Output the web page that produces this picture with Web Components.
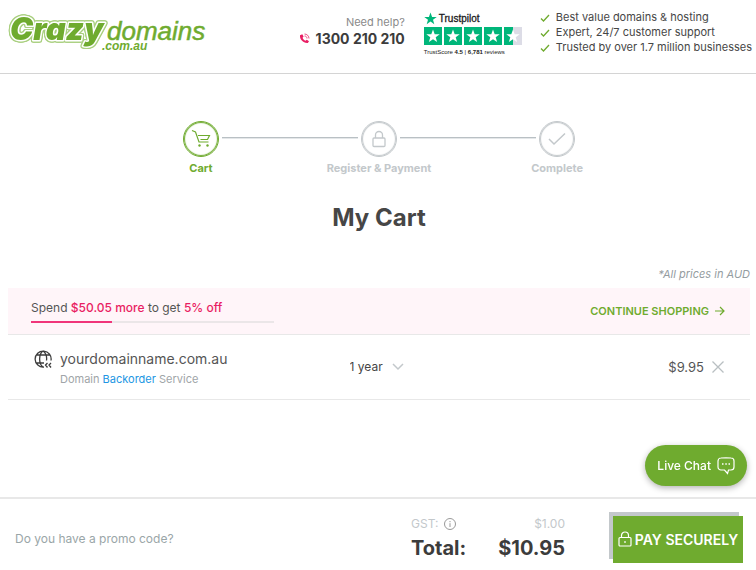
<!DOCTYPE html>
<html lang="en">
<head>
<meta charset="utf-8">
<meta name="viewport" content="width=device-width, initial-scale=1">
<title>My Cart</title>
<style>
    body {
        margin: 0;
        min-height: 100vh;
        display: flex;
        flex-direction: column;
        background: #fff;
        color: #464646;
        font-family: Inter, "Open Sans", sans-serif;
        font-size: 11px;
        --green: #6fab2f;
        --pink: #e91e63;
        --grey: #c3c8cb;
        --line: #e8e8e8;
    }
</style>
</head>
<body>
<site-header>
    <brand-logo slot="logo"></brand-logo>
    <phone-help></phone-help>
    <trust-score></trust-score>
    <benefit-list></benefit-list>
</site-header>

<cart-page>
    <cart-steps slot="steps">
        <cart-step label="Cart" active>
            <svg width="20" height="20" viewBox="0 0 20 20" fill="none" stroke="currentColor" stroke-width="1.2">
                <path d="M1 1.500l3.500 1.500 3.500 10h9.500M7 6.500h11.500l-2 4H9.500"/>
                <circle cx="8.500" cy="16.500" r="1.200" fill="currentColor" stroke="none"/>
                <circle cx="16.500" cy="16.500" r="1.200" fill="currentColor" stroke="none"/>
            </svg>
        </cart-step>
        <cart-step label="Register &amp; Payment">
            <svg width="16" height="18" viewBox="0 0 16 18" fill="none" stroke="currentColor" stroke-width="1.300">
                <rect x="2" y="8" width="12" height="8.500" rx="1"/>
                <path d="M4.500 8V5a3.500 3.500 0 0 1 7 0v3"/>
            </svg>
        </cart-step>
        <cart-step label="Complete">
            <svg width="18" height="14" viewBox="0 0 18 14" fill="none" stroke="currentColor" stroke-width="1.500">
                <path d="M1 7l5 5L17 1.500"/>
            </svg>
        </cart-step>
    </cart-steps>
    <spend-offer></spend-offer>
    <cart-item name="yourdomainname.com.au" price="$9.95">Domain <a href="#backorder">Backorder</a> Service</cart-item>
</cart-page>

<cart-footer></cart-footer>
<live-chat></live-chat>

<script>
// Creates the open shadow root of a component
class BaseElement extends HTMLElement {
    constructor() {
        super();
        this.attachShadow({ mode: 'open' });
    }

    connectedCallback() {
        this.shadowRoot.innerHTML = this.render();
    }
}

// Top bar with the logo on the left and the help details on the right
class SiteHeader extends BaseElement {
    render() {
        return `
            <style>
                :host { display: block; border-bottom: 1px solid #d4d4d4; }
                header {
                    display: flex;
                    justify-content: space-between;
                    height: 73px;
                    padding: 0 4px 0 8px;
                    box-sizing: border-box;
                }
                .info { display: flex; gap: 19px; padding-top: 10px; }
            </style>
            <header>
                <slot name="logo"></slot>
                <div class="info"><slot></slot></div>
            </header>
        `;
    }
}

// Logo: outlined first word, plain second word, suffix underneath
class BrandLogo extends BaseElement {
    render() {
        return `
            <style>
                :host { display: block; padding-top: 8px; }
                a { display: block; color: var(--green); text-decoration: none; }
                svg { display: block; overflow: visible; }
                .crazy {
                    font: italic 900 31px Inter, sans-serif;
                    stroke: #fff;
                    stroke-width: 3px;
                    stroke-linejoin: round;
                    paint-order: stroke;
                    filter: drop-shadow(1px 0 0 #a9cf7f) drop-shadow(-1px 0 0 #a9cf7f) drop-shadow(0 1px 0 #a9cf7f) drop-shadow(0 -1px 0 #a9cf7f);
                }
                .domains { font: italic 400 26px "Liberation Sans", sans-serif; stroke: currentColor; stroke-width: 0.5px; }
                .suffix { font: italic 700 12px "Liberation Sans", sans-serif; }
            </style>
            <a href="#home" aria-label="Crazy Domains home">
                <svg width="200" height="48" viewBox="0 0 200 48" fill="currentColor">
                    <text class="crazy" x="2" y="32">Crazy</text>
                    <text class="domains" x="99" y="32">domains</text>
                    <text class="suffix" x="94" y="42">.com.au</text>
                </svg>
            </a>
        `;
    }
}

class PhoneHelp extends BaseElement {
    render() {
        return `
            <style>
                :host { display: block; padding-top: 5px; text-align: right; }
                p { margin: 0; line-height: 15px; color: #8a8a8a; }
                a {
                    display: flex;
                    align-items: center;
                    gap: 6px;
                    color: #3c3c3c;
                    font-size: 14px;
                    font-weight: 700;
                    line-height: 17px;
                    text-decoration: none;
                }
                svg { color: var(--pink); }
            </style>
            <p>Need help?</p>
            <a href="tel:1300210210">
                <svg width="11" height="11" viewBox="0 0 11 11" fill="none" stroke="currentColor" aria-hidden="true">
                    <path d="M1 2.300C.5 6.500 4.500 10.500 8.800 10l1.200-1.800-2.200-1.400-1.300 1C5 7.200 4 6 3.600 4.700l1-1.100L3.300 1.300Z" fill="currentColor" stroke="none"/>
                    <path d="M5.500 1c2.500 0 4.500 2 4.500 4.500M5.500 3c1.500 0 2.500 1 2.500 2.500" stroke-width=".8"/>
                </svg>
                1300 210 210
            </a>
        `;
    }
}

// Trustpilot rating, the last star is half filled
class TrustScore extends BaseElement {
    render() {
        const star = 'M0-7 1.700-2.200H6.700L2.700.8 4.100 5.600 0 2.700-4.100 5.600-2.700.8-6.700-2.200H-1.700Z';
        const stars = [0, 1, 2, 3, 4].map(i => `
            <rect x="${i * 20}" width="18" height="18" fill="${i < 4 ? '#00b67a' : 'url(#half)'}"/>
            <path d="${star}" transform="translate(${i * 20 + 9} 9.500)" fill="#fff"/>
        `).join('');
        return `
            <style>
                :host { display: block; width: 97px; color: #1b1b21; font-family: "Liberation Sans", sans-serif; }
                .name { display: flex; align-items: center; gap: 2px; height: 16px; font-size: 10px; -webkit-text-stroke: 0.3px; }
                .stars { display: block; margin-top: 1px; }
                .score { margin-top: 4px; font-size: 6px; line-height: 7px; white-space: nowrap; }
            </style>
            <div class="name">
                <svg width="13" height="13" viewBox="-7 -7 14 13" fill="#00b67a" aria-hidden="true"><path d="${star}"/></svg>
                Trustpilot
            </div>
            <svg class="stars" width="98" height="18" role="img" aria-label="4.5 out of 5 stars">
                <linearGradient id="half">
                    <stop offset=".5" stop-color="#00b67a"/>
                    <stop offset=".5" stop-color="#dcdce6"/>
                </linearGradient>
                ${stars}
            </svg>
            <div class="score">TrustScore <b>4.5</b> | <b>6,781</b> reviews</div>
        `;
    }
}

class BenefitList extends BaseElement {
    render() {
        const items = [
            'Best value domains &amp; hosting',
            'Expert, 24/7 customer support',
            'Trusted by over 1.7 million businesses'
        ];
        return `
            <style>
                :host { display: block; }
                ul { margin: 0; padding: 0; list-style: none; }
                li { display: flex; align-items: center; gap: 6px; line-height: 15px; white-space: nowrap; }
                svg { color: var(--green); }
            </style>
            <ul>
                ${items.map(text => `
                    <li>
                        <svg width="10" height="8" viewBox="0 0 10 8" fill="none" stroke="currentColor" stroke-width="1.300" aria-hidden="true"><path d="M1 4.500l2.500 2.500L9 1"/></svg>
                        ${text}
                    </li>
                `).join('')}
            </ul>
        `;
    }
}

class CartSteps extends BaseElement {
    render() {
        return `
            <style>
                :host {
                    display: grid;
                    grid-template-columns: repeat(3, 1fr);
                    width: 72%;
                    margin: 0 auto;
                }
            </style>
            <slot></slot>
        `;
    }
}

// One step. The lines of neighbouring steps meet between the circles
class CartStep extends BaseElement {
    render() {
        return `
            <style>
                :host { display: block; color: var(--grey); text-align: center; font-weight: 700; }
                :host([active]) { color: var(--green); }
                .rail { display: flex; align-items: center; gap: 3px; }
                .rail::before, .rail::after {
                    content: "";
                    flex: 1;
                    height: 1px;
                    margin-bottom: 2px;
                    background: #b9c0c4;
                    border-bottom: 1px solid #e4e7e9;
                }
                :host(:first-child) .rail::before, :host(:last-child) .rail::after { visibility: hidden; }
                .circle {
                    display: grid;
                    place-items: center;
                    width: 34px;
                    height: 34px;
                    border: 1px solid;
                    border-radius: 50%;
                    box-shadow: inset 0 0 1px 1px currentColor;
                }
                .label { margin-top: 4px; line-height: 14px; }
            </style>
            <div class="rail"><div class="circle"><slot></slot></div></div>
            <div class="label">${this.getAttribute('label').replace('&', '&amp;')}</div>
        `;
    }
}

class CartPage extends BaseElement {
    render() {
        return `
            <style>
                :host { display: block; flex: 1; padding: 47px 6px 0 8px; }
                h1 { margin: 27px 0 0; text-align: center; font-size: 24px; line-height: 32px; }
                .note { margin: 32px 0 6px; text-align: right; font-style: italic; line-height: 16px; color: #949c9f; }
            </style>
            <main>
                <slot name="steps"></slot>
                <h1>My Cart</h1>
                <p class="note">*All prices in AUD</p>
                <slot></slot>
            </main>
        `;
    }
}

class SpendOffer extends BaseElement {
    render() {
        return `
            <style>
                :host {
                    display: flex;
                    justify-content: space-between;
                    align-items: center;
                    height: 46px;
                    padding: 0 25px 0 23px;
                    background: #fff5f9;
                    border-bottom: 1px solid var(--line);
                }
                label { display: block; color: #555; font-size: 12px; line-height: 16px; }
                b { color: var(--pink); font-weight: 500; }
                progress {
                    display: block;
                    appearance: none;
                    width: 243px;
                    height: 2px;
                    margin-top: 5px;
                    border: 0;
                }
                progress::-webkit-progress-bar { background: #ebe6e8; }
                progress::-webkit-progress-value { background: #f0357a; }
                a {
                    display: flex;
                    align-items: center;
                    gap: 6px;
                    color: var(--green);
                    font-weight: 600;
                    text-decoration: none;
                }
            </style>
            <div>
                <label for="spend">Spend <b>$50.05 more</b> to get <b>5% off</b></label>
                <progress id="spend" value="1" max="3"></progress>
            </div>
            <a href="#shop">
                CONTINUE SHOPPING
                <svg width="10" height="10" viewBox="0 0 10 10" fill="none" stroke="currentColor" stroke-width="1.200" aria-hidden="true"><path d="M0 5h9M5 1l4 4-4 4"/></svg>
            </a>
        `;
    }
}

// Line of the cart, the description comes in through the slot
class CartItem extends BaseElement {
    render() {
        return `
            <style>
                :host {
                    display: grid;
                    grid-template-columns: 15fr 14fr auto;
                    align-items: center;
                    height: 64px;
                    padding: 0 26px 0 0;
                    border-bottom: 1px solid var(--line);
                }
                .product { display: flex; gap: 8px; padding-left: 26px; }
                .name { font-size: 14px; line-height: 20px; color: #555; }
                .details { margin-top: 3px; line-height: 14px; color: #a0a5a8; }
                ::slotted(a) { color: #2196e3; text-decoration: none; }
                .term { display: flex; align-items: center; }
                select {
                    appearance: none;
                    padding: 0 20px 0 0;
                    border: 0;
                    background: none;
                    color: inherit;
                    font: 12px/16px Inter, sans-serif;
                }
                .term svg { margin-left: -12px; pointer-events: none; color: var(--grey); }
                .price { display: flex; align-items: center; gap: 8px; font-size: 13px; color: #555; }
                button { display: flex; padding: 0; border: 0; background: none; color: #b9bfc2; }
            </style>
            <div class="product">
                <svg width="18" height="20" viewBox="0 0 18 20" fill="none" stroke="#3c3c3c" stroke-width="1.300" aria-hidden="true">
                    <path d="M10 18A8 8 0 1 1 17 11.500M9 18C4.500 15 4.500 5 9 2c3.500 2.500 4 6 3.500 9.500M2.500 6h13M2.500 14H10"/>
                    <path d="M13.500 14l-2 2 2 2.500M17 14l-2 2 2 2.500"/>
                </svg>
                <div>
                    <div class="name">${this.getAttribute('name')}</div>
                    <div class="details"><slot></slot></div>
                </div>
            </div>
            <div class="term">
                <select aria-label="Term"><option>1 year</option></select>
                <svg width="12" height="8" viewBox="0 0 12 8" fill="none" stroke="currentColor" stroke-width="1.500"><path d="M1 1l5 5 5-5"/></svg>
            </div>
            <div class="price">
                ${this.getAttribute('price')}
                <button type="button" aria-label="Remove">
                    <svg width="12" height="12" viewBox="0 0 12 12" stroke="currentColor" stroke-width="1.300"><path d="M.5.5l11 11M11.500.5l-11 11"/></svg>
                </button>
            </div>
        `;
    }
}

class CartFooter extends BaseElement {
    render() {
        return `
            <style>
                :host { display: block; border-top: 2px solid var(--line); }
                footer {
                    display: flex;
                    align-items: center;
                    height: 71px;
                    padding: 0 13px 0 15px;
                }
                button { border: 0; padding: 0; background: none; font: inherit; cursor: pointer; }
                .promo { margin-right: auto; color: #9aa6a8; font-size: 12px; line-height: 16px; padding-top: 9px; }
                dl {
                    display: grid;
                    grid-template-columns: auto auto;
                    column-gap: 32px;
                    margin: 0 48px 0 0;
                    padding-top: 10px;
                    font-size: 12px;
                    line-height: 16px;
                    color: var(--grey);
                }
                dt, dd { display: flex; align-items: center; gap: 6px; margin: 0; }
                dd { justify-content: flex-end; }
                .info { display: flex; color: #999; }
                .total { color: #3c3c3c; font-size: 20px; font-weight: 700; line-height: 32px; }
                .pay {
                    display: flex;
                    align-items: center;
                    justify-content: center;
                    gap: 3px;
                    width: 130px;
                    height: 47px;
                    margin-top: 9px;
                    background: var(--green);
                    box-shadow: -4px -4px 0 #c3c8cb;
                    color: #fff;
                    font-size: 14px;
                    font-weight: 600;
                    white-space: nowrap;
                }
            </style>
            <footer>
                <button type="button" class="promo">Do you have a promo code?</button>
                <dl>
                    <dt>GST:
                        <button type="button" class="info" aria-label="About GST">
                            <svg width="12" height="12" viewBox="0 0 12 12" fill="none" stroke="currentColor"><circle cx="6" cy="6" r="5.500"/><path d="M6 3v1.200M6 5.200V9"/></svg>
                        </button>
                    </dt>
                    <dd>$1.00</dd>
                    <dt class="total">Total:</dt>
                    <dd class="total">$10.95</dd>
                </dl>
                <button type="button" class="pay">
                    <svg width="14" height="16" viewBox="0 0 14 16" fill="none" stroke="currentColor" stroke-width="1.200" aria-hidden="true">
                        <rect x="1" y="6.500" width="12" height="8.500" rx="1"/>
                        <path d="M3.500 6.500V4.500a3.500 3.500 0 0 1 7 0v2M7 10v2"/>
                    </svg>
                    PAY SECURELY
                </button>
            </footer>
        `;
    }
}

// Chat button that floats above the footer
class LiveChat extends BaseElement {
    render() {
        return `
            <style>
                :host { position: fixed; right: 9px; bottom: 84px; }
                button {
                    display: flex;
                    align-items: center;
                    gap: 6px;
                    height: 41px;
                    padding: 0 12px;
                    border: 0;
                    border-radius: 21px;
                    background: var(--green);
                    box-shadow: 0 2px 6px rgba(0, 0, 0, 0.3);
                    color: #fff;
                    font: 500 12px Inter, sans-serif;
                    white-space: nowrap;
                    cursor: pointer;
                }
            </style>
            <button type="button">
                Live Chat
                <svg width="18" height="18" viewBox="0 0 18 18" fill="none" stroke="currentColor" stroke-width="1.200" aria-hidden="true">
                    <path d="M4 1Q9 .6 14 1a3 3 0 0 1 3 3v6a3 3 0 0 1-3 3h-2.500l-1 3.500L7.500 13H4a3 3 0 0 1-3-3V4a3 3 0 0 1 3-3Z"/>
                    <path d="M5 7h1.500M8.300 7h1.500M11.500 7H13" stroke-width="1.500"/>
                </svg>
            </button>
        `;
    }
}

customElements.define('site-header', SiteHeader);
customElements.define('brand-logo', BrandLogo);
customElements.define('phone-help', PhoneHelp);
customElements.define('trust-score', TrustScore);
customElements.define('benefit-list', BenefitList);
customElements.define('cart-steps', CartSteps);
customElements.define('cart-step', CartStep);
customElements.define('cart-page', CartPage);
customElements.define('spend-offer', SpendOffer);
customElements.define('cart-item', CartItem);
customElements.define('cart-footer', CartFooter);
customElements.define('live-chat', LiveChat);
</script>
</body>
</html>
